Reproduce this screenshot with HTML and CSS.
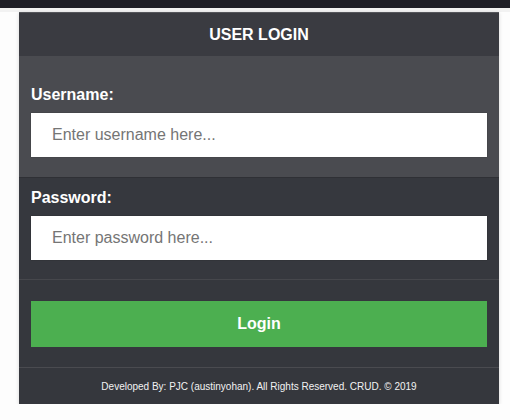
FILE: index.html
```html
<!DOCTYPE html>
<html lang="en">
<head>
  <meta charset="UTF-8">
  <title>User Login</title>
  <link rel="stylesheet" href="styles.css">
</head>
<body>
  <div class="topbar"></div>

  <div class="login-box">
    <header>
      <h1>USER LOGIN</h1>
    </header>

    <form action="#" method="post">
      <!-- Username -->
      <div class="field field-user">
        <label for="username">Username:</label>
        <input type="text" name="username" id="username" placeholder="Enter username here...">
      </div>

      <!-- Password -->
      <div class="field field-pass">
        <label for="password">Password:</label>
        <input type="password" name="password" id="password" placeholder="Enter password here...">
      </div>

      <div class="actions">
        <button class="btn" type="submit">Login</button>
      </div>
    </form>

    <footer>
      Developed By: PJC (austinyohan). All Rights Reserved. CRUD. &copy; 2019
    </footer>
  </div>
</body>
</html>
```

FILE: styles.css
```css
body {
  font-family: 'Liberation Sans', Arial, sans-serif;
  background: #fdfdfd;
  margin: 0;
  padding: 0;
}

.topbar {
  height: 8px;
  background: #1f1f26;
  border-bottom: 4px solid #f2f2f2;
}

.login-box {
  width: 480px;
  margin: 0 0 0 19px;
  border-top: 1px solid #55565b;
  background: #35373d;
  box-shadow: 0 1px 4px rgba(0,0,0,0.15);
  color: #fff;
}

header {
  background: #3a3b41;
  height: 43px;
  display: flex;
  align-items: center;
  justify-content: center;
}

header h1 {
  margin: 0;
  font-size: 16px;
  font-weight: bold;
}

form {
  margin: 0;
}

.field {
  display: flex;
  flex-direction: column;
  padding: 0 12px;
}

.field-user {
  background: #4a4b50;
  padding-top: 30px;
  padding-bottom: 20px;
  border-bottom: 1px solid #2f3035;
}

.field-pass {
  background: #36383e;
  padding-top: 11px;
  padding-bottom: 19px;
  border-bottom: 1px solid #46474c;
}

label {
  font-size: 16px;
  font-weight: bold;
  line-height: 18px;
  margin-bottom: 9px;
}

input {
  height: 44px;
  box-sizing: border-box;
  border: none;
  border-radius: 0;
  padding: 0 21px;
  font-family: 'Liberation Sans', Arial, sans-serif;
  font-size: 16px;
  color: #333;
  background: #fff;
  box-shadow: 0 0 1px rgba(0,0,0,0.4);
}

input::placeholder {
  color: #757575;
}

.actions {
  padding: 21px 12px 20px;
  border-bottom: 1px solid #4a4b50;
}

.btn {
  display: block;
  width: 100%;
  height: 46px;
  background: #4caf50;
  color: #fff;
  border: none;
  font-family: 'Liberation Sans', Arial, sans-serif;
  font-size: 16px;
  font-weight: bold;
  cursor: pointer;
}

footer {
  height: 36px;
  display: flex;
  align-items: center;
  justify-content: center;
  font-size: 10px;
  color: #f2f2f2;
}
```
